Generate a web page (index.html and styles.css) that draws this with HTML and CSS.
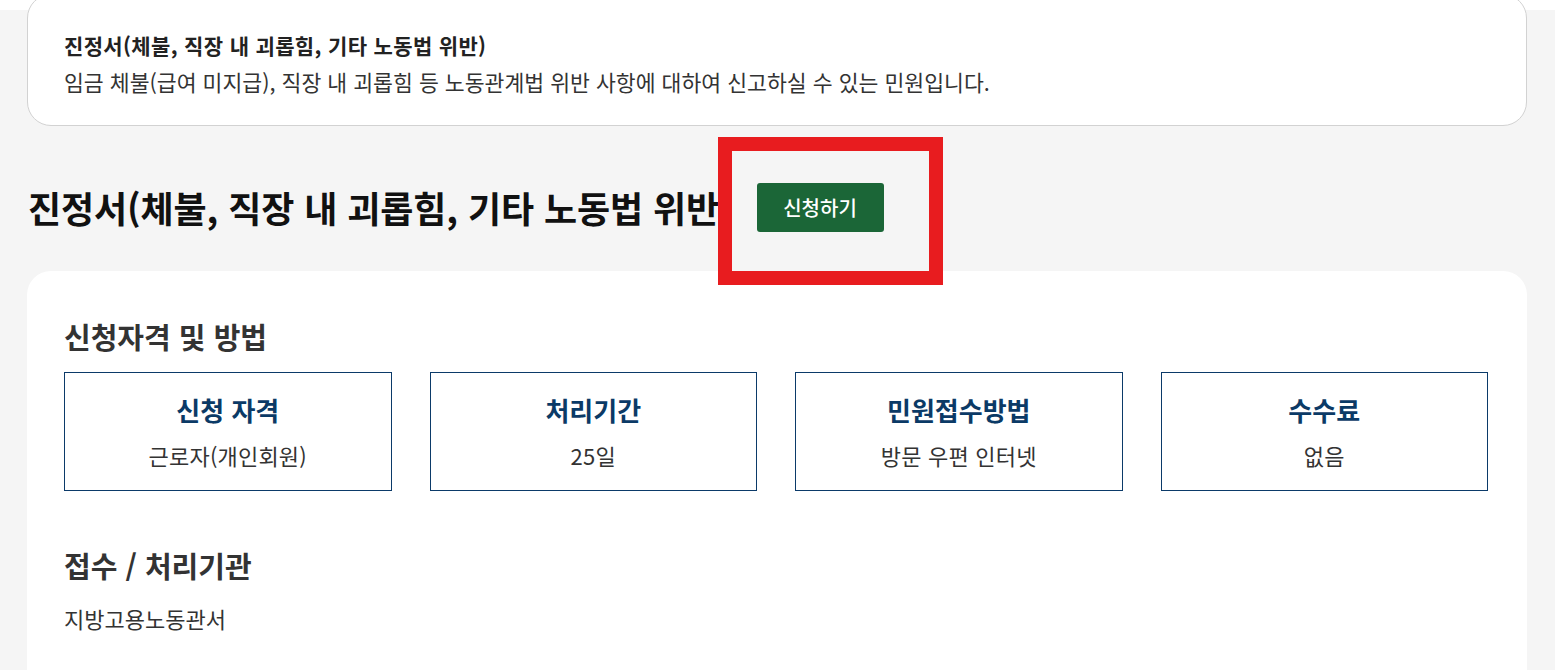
FILE: index.html
```html
<!DOCTYPE html>
<html lang="ko">
<head>
<meta charset="utf-8">
<title>진정서</title>
<link rel="stylesheet" href="styles.css">
</head>
<body>
<div class="page">
  <div class="summary-card">
    <p class="summary-title">진정서(체불, 직장 내 괴롭힘, 기타 노동법 위반)</p>
    <p class="summary-desc">임금 체불(급여 미지급), 직장 내 괴롭힘 등 노동관계법 위반 사항에 대하여 신고하실 수 있는 민원입니다.</p>
  </div>

  <div class="head-row">
    <h1 class="page-title">진정서(체불, 직장 내 괴롭힘, 기타 노동법 위반)</h1>
    <button class="apply-btn" type="button">신청하기</button>
  </div>

  <div class="detail-card">
    <h2 class="section-title">신청자격 및 방법</h2>
    <div class="info-grid">
      <div class="info-box">
        <div class="info-label">신청 자격</div>
        <div class="info-value">근로자(개인회원)</div>
      </div>
      <div class="info-box">
        <div class="info-label">처리기간</div>
        <div class="info-value">25일</div>
      </div>
      <div class="info-box">
        <div class="info-label">민원접수방법</div>
        <div class="info-value">방문 우편 인터넷</div>
      </div>
      <div class="info-box">
        <div class="info-label">수수료</div>
        <div class="info-value">없음</div>
      </div>
    </div>
    <h2 class="section-title section-gap">접수 / 처리기관</h2>
    <p class="agency">지방고용노동관서</p>
  </div>

  <div class="highlight-box"></div>
</div>
</body>
</html>
```

FILE: styles.css
```css
* { box-sizing: border-box; }

html, body {
  margin: 0;
  padding: 0;
  background: #ffffff;
  height: 100%;
  overflow: hidden;
}

body {
  font-family: "Noto Sans CJK KR", "Noto Sans", sans-serif;
  color: #333333;
}

.page {
  position: relative;
  display: flow-root;
  margin-top: 10px;
  background: #f5f5f5;
  padding: 0 28px 0 27px;
}

.summary-card {
  margin-top: -16px;
  background: #ffffff;
  border: 1px solid #d2d2d2;
  border-radius: 24px;
  padding: 35px 36px 25px 36px;
}

.summary-title {
  margin: 0;
  font-size: 21px;
  line-height: 30px;
  font-weight: 700;
  color: #222222;
  letter-spacing: 0.35px;
}

.summary-desc {
  margin: 4px 0 0;
  font-size: 21.6px;
  line-height: 36px;
  color: #333333;
}

.head-row {
  display: flex;
  align-items: center;
  gap: 24px;
  margin-top: 57px;
  padding-left: 1px;
}

.page-title {
  margin: 0;
  font-size: 36px;
  line-height: 49px;
  font-weight: 700;
  color: #111111;
  letter-spacing: -0.1px;
}

.apply-btn {
  height: 49px;
  width: 127px;
  border: 0;
  border-radius: 3px;
  background: #1b6637;
  color: #ffffff;
  font-family: inherit;
  font-size: 20px;
  font-weight: 500;
  padding: 0;
}

.detail-card {
  margin-top: 39px;
  background: #ffffff;
  border-radius: 24px 24px 0 0;
  padding: 46px 39px 38px 37px;
}

.section-title {
  margin: 0;
  font-size: 29px;
  line-height: 38px;
  font-weight: 700;
  color: #333333;
}

.section-gap {
  margin-top: 55px;
}

.info-grid {
  margin-top: 17px;
  display: grid;
  grid-template-columns: repeat(4, 1fr);
  gap: 38px;
}

.info-box {
  height: 119px;
  border: 1px solid #0b3a69;
  padding-top: 20px;
  text-align: center;
}

.info-label {
  font-size: 26px;
  line-height: 34px;
  font-weight: 700;
  color: #0b3a66;
}

.info-value {
  margin-top: 13px;
  font-size: 22px;
  line-height: 30px;
  color: #333333;
  letter-spacing: 0.2px;
}

.agency {
  margin: 20px 0 0;
  font-size: 22px;
  line-height: 28px;
  color: #333333;
}

.highlight-box {
  position: absolute;
  left: 718px;
  top: 127px;
  width: 225px;
  height: 148px;
  border: 14px solid #e81c1f;
}
```
